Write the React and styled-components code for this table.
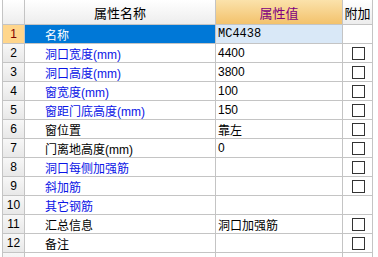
import React from "react"
import { styled, createGlobalStyle } from "styled-components"

const GlobalStyle = createGlobalStyle`
  html, body {
    margin: 0;
    padding: 0;
    background: #ffffff;
    overflow: hidden;
  }
  body {
    font-family: "Liberation Sans", "Noto Sans CJK SC", sans-serif;
    font-size: 12px;
  }
`

const COLS = "21px 190px 126px 29px"
const LINE = "#c4c4c4"

const Table = styled.div`
  margin-left: 2px;
  width: 371px;
  height: 257px;
  display: flex;
  flex-direction: column;
  gap: 1px;
  padding: 0 1px;
  box-sizing: border-box;
  background-color: ${LINE};
  overflow: hidden;
`

const Row = styled.div`
  display: grid;
  grid-template-columns: ${COLS};
  gap: 1px;
  height: ${(p) => (p.$head ? "24px" : "18px")};
  flex: none;
`

const HeadCell = styled.div`
  display: flex;
  align-items: center;
  justify-content: center;
  font-size: 13px;
  color: ${(p) => (p.$value ? "#800080" : "#000000")};
  background: ${(p) =>
    p.$value
      ? "linear-gradient(#fbe2ab, #f3c26c)"
      : "linear-gradient(#ffffff, #ededed)"};
`

const NumCell = styled.div`
  display: flex;
  align-items: center;
  justify-content: center;
  font-size: 12px;
  color: ${(p) => (p.$active ? "#800000" : "#000000")};
  background: ${(p) =>
    p.$active ? "#ffd68c" : "linear-gradient(#f7f7f7, #e8e8e8)"};
`

const NameCell = styled.div`
  display: flex;
  align-items: center;
  padding-left: 20px;
  white-space: nowrap;
  color: ${(p) => (p.$active ? "#ffffff" : p.$blue ? "#0a14e6" : "#000000")};
  background: ${(p) => (p.$active ? "#0078d7" : "#ffffff")};
`

const ValueCell = styled.div`
  display: flex;
  align-items: center;
  padding-left: 2px;
  white-space: nowrap;
  color: #000000;
  font-family: ${(p) =>
    p.$mono ? '"Liberation Mono", monospace' : "inherit"};
  background: ${(p) => (p.$active ? "#d9e8f7" : "#ffffff")};
`

const CheckCell = styled.div`
  display: flex;
  align-items: center;
  justify-content: center;
  padding-left: 1px;
  background: #ffffff;
`

const Box = styled.span`
  width: 11px;
  height: 11px;
  border: 1px solid #333333;
  background: #ffffff;
`

const rows = [
  { name: "名称", value: "MC4438", blue: true, check: false },
  { name: "洞口宽度(mm)", value: "4400", blue: true, check: true },
  { name: "洞口高度(mm)", value: "3800", blue: true, check: true },
  { name: "窗宽度(mm)", value: "100", blue: true, check: true },
  { name: "窗距门底高度(mm)", value: "150", blue: true, check: true },
  { name: "窗位置", value: "靠左", blue: false, check: true },
  { name: "门离地高度(mm)", value: "0", blue: false, check: true },
  { name: "洞口每侧加强筋", value: "", blue: true, check: true },
  { name: "斜加筋", value: "", blue: true, check: true },
  { name: "其它钢筋", value: "", blue: true, check: false },
  { name: "汇总信息", value: "洞口加强筋", blue: false, check: true },
  { name: "备注", value: "", blue: false, check: true },
]

export default function App() {
  return (
    <>
      <GlobalStyle />
      <Table>
        <Row $head>
          <HeadCell />
          <HeadCell>属性名称</HeadCell>
          <HeadCell $value>属性值</HeadCell>
          <HeadCell>附加</HeadCell>
        </Row>
        {rows.map((r, i) => (
          <Row key={i}>
            <NumCell $active={i === 0}>{i + 1}</NumCell>
            <NameCell $active={i === 0} $blue={r.blue}>
              {r.name}
            </NameCell>
            <ValueCell $active={i === 0} $mono={i === 0}>
              {r.value}
            </ValueCell>
            <CheckCell>{r.check && <Box />}</CheckCell>
          </Row>
        ))}
        <Row>
          <NumCell />
          <NameCell />
          <ValueCell />
          <CheckCell />
        </Row>
      </Table>
    </>
  )
}
